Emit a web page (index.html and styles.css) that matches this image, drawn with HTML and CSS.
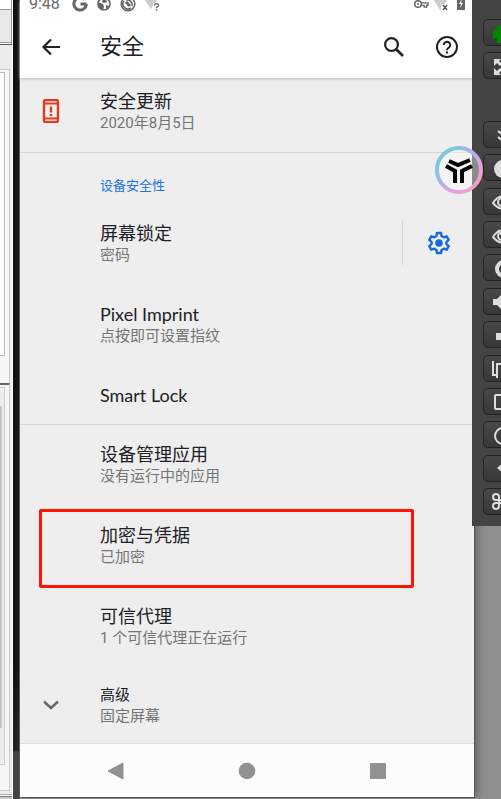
FILE: index.html
```html
<!DOCTYPE html>
<html lang="zh-CN">
<head>
<meta charset="utf-8">
<meta name="viewport" content="width=device-width, initial-scale=1">
<title>安全</title>
<link rel="stylesheet" href="styles.css">
</head>
<body>
<div class="desktop">
  <aside class="window-edge" aria-hidden="true">
    <div class="edge-tab"></div>
    <div class="edge-panel edge-upper"><div class="edge-page"></div></div>
    <div class="edge-panel edge-lower"><div class="edge-well"><div class="edge-scroll"></div></div></div>
    <div class="edge-foot"></div>
  </aside>
  <div class="bezel"></div>
  <main class="phone">
    <header class="top">
      <div class="status">
        <span class="clock">9:48</span>
        <svg class="status-icon" viewBox="0 0 16 16"><path d="M14.500 8H8.500M14.300 8a6.200 6.200 0 1 1-1.700-4.400" fill="none" stroke="#666" stroke-width="3"/></svg>
        <svg class="status-icon" viewBox="0 0 16 16"><circle cx="8" cy="8" r="6" fill="#fff" stroke="#666" stroke-width="1.600"/><path d="M2 6l5 2 1 3-1 3C4 14 1 10 2 6zM7 2l3 1 1 3-3 1-2-1zM10 9l3 1-3 4z" fill="#666"/></svg>
        <svg class="status-icon" viewBox="0 0 16 16"><circle cx="8" cy="8" r="6.800" fill="none" stroke="#666" stroke-width="1.500"/><path d="M4 5a5 5 0 0 0 7 7M6 4a5 5 0 0 1 6 6" fill="none" stroke="#666" stroke-width="1.600"/><path d="M6 6l4 4" stroke="#666" stroke-width="3"/></svg>
        <svg class="status-icon" viewBox="0 0 16 16"><path d="M0 3h14L7 13z" fill="#ccc"/><path d="M9 7h7v9H9z" fill="#fff"/><path d="M10.500 9.500q0-1.800 2-1.800t2 1.600q0 1-1.200 1.600-.8.500-.8 1.400M12.500 13.200v1.500" fill="none" stroke="#666" stroke-width="1.300"/></svg>
        <span class="spacer"></span>
        <span class="status-end">
          <svg class="status-icon" viewBox="0 0 16 16"><circle cx="5" cy="8" r="3.300" fill="none" stroke="#666" stroke-width="1.500"/><circle cx="5" cy="8" r="1" fill="#666"/><path d="M8 6.800h7v2.600h-1.300V11h-2.600V9.400H8" fill="none" stroke="#666" stroke-width="1.300"/></svg>
          <svg class="status-icon" viewBox="0 0 16 16"><path d="M0 3h15L7 14z" fill="#ccc"/><path d="M8 8h8v8H8z" fill="#fff"/><path d="M10 9l4 5M14 9l-4 5" stroke="#555" stroke-width="1.500"/></svg>
          <svg class="status-icon" viewBox="0 0 16 16"><path d="M4 0h8v14H4z" fill="#666"/><path d="M9 3L6 8h2l-1 4 3-5H8z" fill="#fff"/></svg>
        </span>
      </div>
      <div class="appbar">
        <button class="icon-btn" aria-label="返回"><svg viewBox="0 0 24 24"><path d="M21 12H5M12 4.500L4.500 12l7.500 7.500" fill="none" stroke="#202124" stroke-width="2.200"/></svg></button>
        <h1>安全</h1>
        <button class="icon-btn" aria-label="搜索"><svg viewBox="0 0 24 24"><circle cx="9.500" cy="9.500" r="6.400" fill="none" stroke="#202124" stroke-width="2.200"/><path d="M14 14l7 7" stroke="#202124" stroke-width="2.600"/></svg></button>
        <button class="icon-btn" aria-label="帮助"><svg viewBox="0 0 24 24"><circle cx="12" cy="12" r="10" fill="none" stroke="#202124" stroke-width="2"/><path d="M8.800 10a3.200 3.200 0 1 1 5.400 2.300C12.800 13.400 12 13.700 12 15.300M12 16.500v2" fill="none" stroke="#202124" stroke-width="2"/></svg></button>
      </div>
    </header>
    <section class="group">
      <a class="row first" href="#update">
        <span class="lead"><svg viewBox="0 0 24 24"><rect x="5" y="1" width="14" height="22" rx="1.500" fill="none" stroke="#d93f20" stroke-width="2.400"/><path d="M5 4.500h14M5 19.500h14" stroke="#d93f20" stroke-width="2"/><path d="M12 7.500v6M12 15v2" stroke="#d93f20" stroke-width="2.400"/></svg></span>
        <span class="text"><span class="title">安全更新</span><span class="sub">2020年8月5日</span></span>
      </a>
    </section>
    <section class="group ruled">
      <h2>设备安全性</h2>
      <div class="row">
        <span class="lead"></span>
        <a class="text" href="#lock"><span class="title">屏幕锁定</span><span class="sub">密码</span></a>
        <button class="gear" aria-label="屏幕锁定设置"><svg viewBox="0 0 24 24"><path d="M10 2h4l.6 3 2.200 1.300 2.900-1 2 3.500L19.400 11v2l2.300 2.200-2 3.500-2.900-1-2.200 1.300-.6 3h-4l-.6-3-2.200-1.300-2.900 1-2-3.500L4.600 13v-2L2.300 8.800l2-3.500 2.900 1L9.400 5z" fill="none" stroke="#1368da" stroke-width="2.400" stroke-linejoin="round"/><circle cx="12" cy="12" r="3.800" fill="#1368da"/></svg></button>
      </div>
      <a class="row" href="#imprint"><span class="lead"></span><span class="text"><span class="title">Pixel Imprint</span><span class="sub">点按即可设置指纹</span></span></a>
      <a class="row single" href="#smart"><span class="lead"></span><span class="text"><span class="title">Smart Lock</span></span></a>
    </section>
    <section class="group ruled">
      <a class="row" href="#admin"><span class="lead"></span><span class="text"><span class="title">设备管理应用</span><span class="sub">没有运行中的应用</span></span></a>
      <a class="row marked" href="#crypto"><span class="lead"></span><span class="text"><span class="title">加密与凭据</span><span class="sub">已加密</span></span></a>
      <a class="row" href="#agents"><span class="lead"></span><span class="text"><span class="title">可信代理</span><span class="sub">1 个可信代理正在运行</span></span></a>
      <a class="row advanced" href="#advanced"><span class="lead"><svg viewBox="0 0 24 24"><path d="M5 8.500l7 6.500 7-6.500" fill="none" stroke="#666" stroke-width="2.400"/></svg></span><span class="text"><span class="title">高级</span><span class="sub">固定屏幕</span></span></a>
    </section>
    <nav class="navbar">
      <button aria-label="后退"><svg viewBox="0 0 18 18"><path d="M1 9L16 1v16z" fill="#919191" stroke="#919191" stroke-linejoin="round"/></svg></button>
      <button aria-label="主屏幕"><svg viewBox="0 0 18 18"><circle cx="9" cy="9" r="8.300" fill="#919191"/></svg></button>
      <button aria-label="最近"><svg viewBox="0 0 18 18"><rect x="1" y="1" width="16" height="16" rx="1" fill="#919191"/></svg></button>
    </nav>
  </main>
  <aside class="toolbar">
    <div class="tools">
      <button aria-label="电源"><svg viewBox="0 0 18 20"><path d="M1 6h4V2l5-1v17H5v-4H1z" fill="#080"/><path d="M9 0h9v19H5v-5h4z" fill="#080"/></svg></button>
      <button aria-label="全屏"><svg viewBox="0 0 18 20"><path d="M2 2h7L7 4l3 3-2 2-3-3-3 3zM2 18h7l-2-2 3-3-2-2-3 3-3-3zM18 2h-7l2 2-3 3 2 2 6-4zM18 18h-7l2-2-3-3 2-2 6 4z" fill="#ddd"/></svg></button>
    </div>
    <div class="tools long">
      <button aria-label="收起"><svg viewBox="0 0 18 20"><path d="M6 5l5 4 5-4M6 11l5 4 5-4" class="line"/></svg></button>
      <button aria-label="录制"><svg viewBox="0 0 18 20"><circle cx="11" cy="10" r="9" fill="#ddd"/></svg></button>
      <button aria-label="显示"><svg viewBox="0 0 18 20"><path d="M1 11q9-13 18 0-9 11-18 0z" class="line"/><circle cx="10" cy="10" r="4" class="line"/></svg></button>
      <button aria-label="隐藏"><svg viewBox="0 0 18 20"><path d="M1 11q9-13 18 0-9 11-18 0zM6 4l10 13" class="line"/><circle cx="10" cy="10" r="4" class="line"/></svg></button>
      <button aria-label="旋转"><svg viewBox="0 0 18 20"><path d="M12 3a7 7 0 0 0 0 14" fill="none" stroke="#ddd" stroke-width="4"/></svg></button>
      <button aria-label="音量加"><svg viewBox="0 0 18 20"><path d="M1 7h4l6-6v18l-6-6H1z" fill="#ddd"/></svg></button>
      <button aria-label="音量减"><svg viewBox="0 0 18 20"><path d="M4 7h12v7H4z" fill="#ddd"/></svg></button>
      <button aria-label="横竖屏"><svg viewBox="0 0 18 20"><path d="M1 2v14h4V5h8M5 16v3" class="line"/></svg></button>
      <button aria-label="多任务"><svg viewBox="0 0 18 20"><rect x="3" y="3" width="20" height="14" rx="1" class="line"/></svg></button>
      <button aria-label="主页"><svg viewBox="0 0 18 20"><circle cx="11" cy="10" r="8" class="line"/></svg></button>
      <button aria-label="返回键"><svg viewBox="0 0 18 20"><path d="M5 9l7-6v12z" fill="#ddd"/></svg></button>
      <button aria-label="快捷键"><svg viewBox="0 0 18 20"><path d="M7 7V5a3 3 0 1 0-3 3h10M7 6v8a3 3 0 1 1-3-3h10" class="line"/></svg></button>
    </div>
  </aside>
  <button class="float" aria-label="助手"><svg viewBox="0 0 48 48"><defs><linearGradient id="ring" x1="0" y1="0" x2="1" y2="1"><stop offset=".2" stop-color="#7bc8df"/><stop offset=".5" stop-color="#b5b0ec"/><stop offset=".7" stop-color="#e5a2dc"/><stop offset=".9" stop-color="#f3a2c5"/></linearGradient></defs><circle cx="24" cy="24" r="22" fill="#fff" fill-opacity=".38" stroke="url(#ring)" stroke-width="4"/><g fill="none" stroke="#050505" stroke-width="4"><path d="M14 15l9 4 12-5"/><path d="M11 20l9 5v12"/><path d="M37 20l-10 5v12"/></g></svg></button>
</div>
</body>
</html>
```
FILE: styles.css
```css
* { box-sizing: border-box; }
body {
  margin: 0;
  font-family: Roboto, "Noto Sans CJK SC", sans-serif;
  color: #202124;
  background: #8f8f8f;
}
.desktop {
  position: relative;
  display: grid;
  grid-template-columns: 13px 7px minmax(0, 1fr) 27px;
  min-height: 100vh;
}
svg { display: block; }
button { padding: 0; border: 0; background: none; font: inherit; }
a { color: inherit; text-decoration: none; }

.window-edge { display: flex; flex-direction: column; background: #ececec; border-right: 1px solid #fff; overflow: hidden; }
.edge-tab { flex: 0 0 45px; border-bottom: 1px solid #555; background: linear-gradient(#fff 9px, #999 9px, #999 10px, #e8e8e8 10px, #e8e8e8 42px, #999 42px, #999 43px, #fff 43px); box-shadow: inset -1px 0 #999; }
.edge-panel { margin-right: 2px; border: solid #ccc; border-width: 1px 1px 0 0; padding: 2px 4px 0 0; background: #f6f6f6; }
.edge-upper { flex: 0 0 314px; margin-top: 24px; }
.edge-page { height: 284px; border: solid #bbb; border-width: 1px 1px 1px 0; background: #fff; }
.edge-lower { flex: 0 0 408px; border-top: 2px solid #666; border-bottom: 1px solid #ccc; }
.edge-well { height: 378px; padding-top: 18px; border: solid #ccc; border-width: 1px 1px 1px 0; background: #eee; }
.edge-scroll { width: 2px; height: 322px; background: #c6c6c6; }
.edge-foot { flex: 1; background: linear-gradient(#ececec 3px, #aaa 3px, #aaa 4px, #fff 4px, #fff 5px, #777 5px, #777 6px, #ccc 6px); }

.bezel { background: linear-gradient(#101010 660px, #222 750px, #444 752px); border-right: 1px solid #555; }
.phone { display: flex; flex-direction: column; margin-bottom: 2px; background: #eee; box-shadow: 1px 1px 0 #555, 4px 0 8px #666; }
.top { position: relative; height: 78px; background: #fff; box-shadow: 0 1px 3px #bbb; }
.status { display: flex; align-items: center; gap: 8px; height: 16px; margin-top: -4px; padding: 0 5px 0 9px; }
.status-end { display: flex; gap: 4px; }
.clock { margin-right: 4px; color: #666; font-size: 16px; line-height: 16px; }
.status-icon { width: 16px; height: 16px; }
.spacer { flex: 1; }
.appbar { display: flex; align-items: center; gap: 29px; height: 66px; padding: 4px 15px 0 19px; }
.icon-btn { width: 24px; height: 24px; }
.icon-btn svg, .lead svg, .gear svg { width: 24px; height: 24px; }
h1 { flex: 1; margin: 0 0 0 8px; font-size: 22px; font-weight: 400; line-height: 30px; }
h2 { margin: 0; padding: 24px 0 7px 80px; color: #1a73e8; font-size: 13px; font-weight: 400; line-height: 20px; }
.ruled { box-shadow: inset 0 1px #d5d5d5; }
.row { position: relative; display: flex; padding: 18px 0 19px 19px; }
.lead { flex: 0 0 61px; }
.text { flex: 1; min-width: 0; }
.title, .sub { display: block; }
.title { font-family: Lato, "Noto Sans CJK SC", sans-serif; font-size: 18px; line-height: 24px; }
.sub { color: #757575; font-size: 15px; line-height: 20px; }
.first { padding-top: 11px; }
.first .lead { padding-top: 10px; }
.single { padding-bottom: 17px; }
.advanced { padding: 15px 0 17px 19px; }
.advanced .lead { padding-top: 11px; }
.advanced .title { font-size: 15px; }
.gear { display: flex; align-items: center; justify-content: center; width: 72px; border-left: 1px solid #d0d3d8; }
.marked::after { content: ""; position: absolute; inset: 4px 60px -2px 19px; border: 3px solid #ff1408; border-radius: 2px; }
.navbar { display: grid; grid-template-columns: repeat(3, 131px); justify-content: center; flex: 1; min-height: 54px; border-top: 1px solid #ddd; background: #fcfcfc; }
.navbar button { display: grid; place-items: center; }
.navbar svg { width: 18px; height: 18px; }

.toolbar { position: absolute; top: 0; right: 0; width: 29px; padding: 19px 0 11px 11px; background: #444; overflow: hidden; }
.tools { display: flex; flex-direction: column; gap: 6px; }
.long { height: 394px; margin-top: 42px; gap: 0; justify-content: space-between; }
.tools button { width: 40px; height: 27px; padding: 2px 0 0 8px; border: 1px solid #222; border-radius: 5px; background: linear-gradient(#484848, #383838); }
.tools svg { width: 18px; height: 20px; }
.line { fill: none; stroke: #ddd; stroke-width: 2; }
.float { position: absolute; top: 146px; right: 18px; width: 48px; height: 48px; }
.float svg { width: 48px; height: 48px; }
```
